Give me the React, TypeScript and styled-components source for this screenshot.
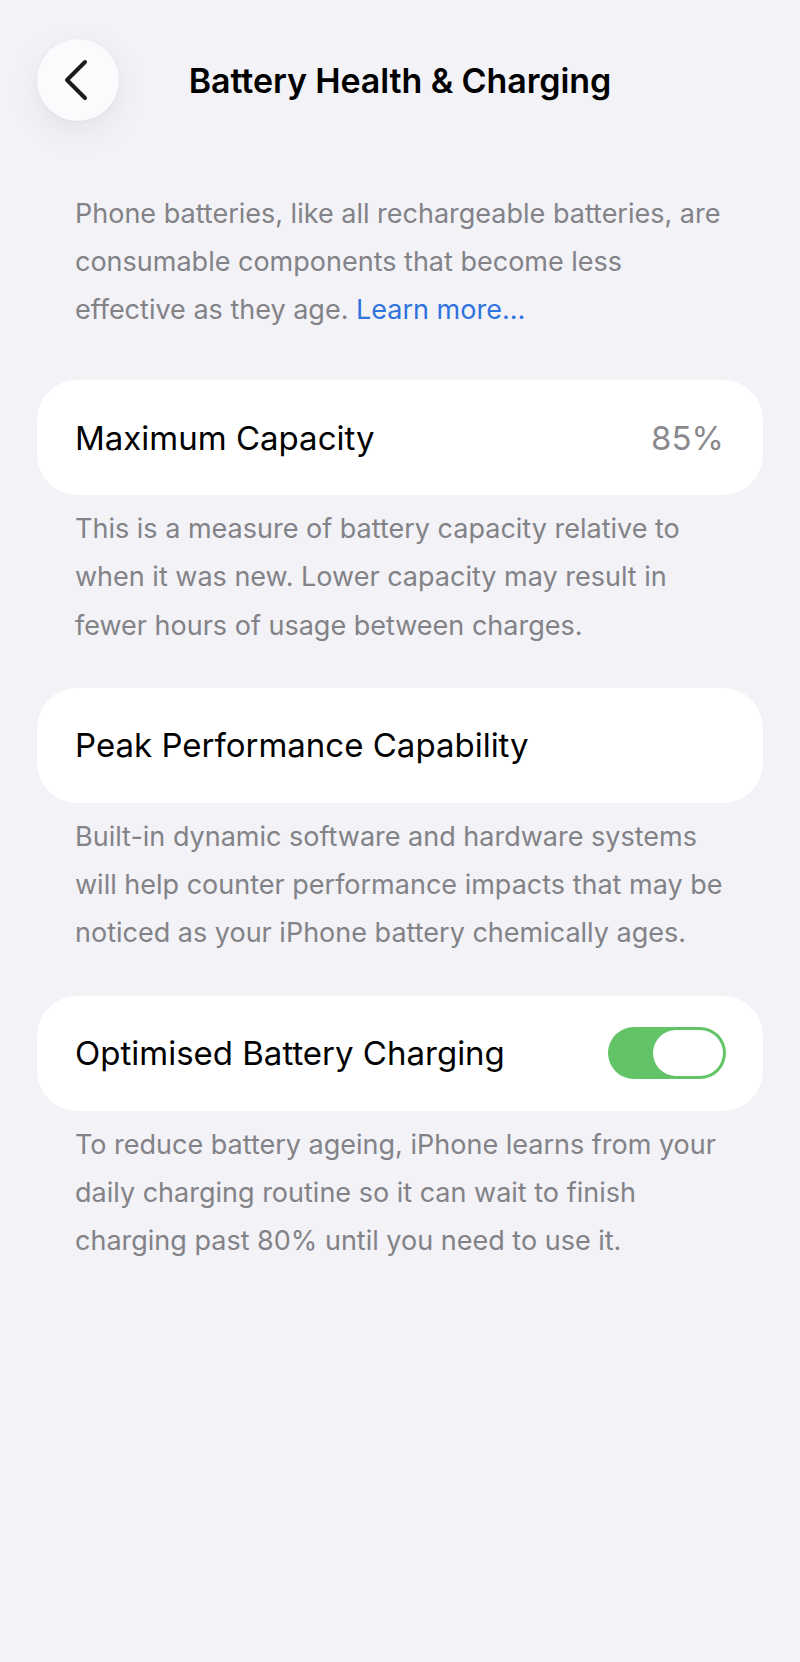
import styled, { createGlobalStyle } from 'styled-components'

const GlobalStyle = createGlobalStyle`
  html, body {
    margin: 0;
    padding: 0;
    background: #f2f2f7;
  }

  body {
    font-family: Inter, "Noto Sans", "Liberation Sans", sans-serif;
    -webkit-font-smoothing: antialiased;
  }
`

const Screen = styled.div`
  background: #f2f2f7;
  min-height: 1662px;
  box-sizing: border-box;
  padding: 39px 37px 0;
`

const Header = styled.header`
  display: grid;
  grid-template-columns: 82px 1fr 82px;
  align-items: center;
  height: 82px;
`

const BackButton = styled.button`
  width: 82px;
  height: 82px;
  border: none;
  border-radius: 50%;
  background: #fbfbfd;
  box-shadow: 0 10px 34px rgba(0, 0, 0, 0.07), 0 1px 4px rgba(0, 0, 0, 0.03);
  display: flex;
  align-items: center;
  justify-content: center;
  padding: 0 4px 0 0;
  cursor: pointer;
`

const Title = styled.h1`
  margin: 0;
  text-align: center;
  font-size: 34px;
  font-weight: 600;
  color: #000;
  letter-spacing: -0.1px;
`

const Intro = styled.p`
  margin: 69px 0 46px;
  padding: 0 38px;
  font-size: 27px;
  line-height: 48px;
  color: #828287;
  white-space: nowrap;
`

const Link = styled.a`
  color: #2f73e0;
  text-decoration: none;
`

const Section = styled.section`
  margin-bottom: 38px;
`

const Card = styled.div`
  height: 115px;
  box-sizing: border-box;
  background: #fff;
  border-radius: 40px;
  display: flex;
  align-items: center;
  justify-content: space-between;
  padding: 0 37px 0 38px;
`

const Label = styled.span`
  font-size: 33px;
  color: #000;
`

const Value = styled.span`
  font-size: 33px;
  color: #8a8a8e;
  margin-right: 2px;
`

const Footer = styled.p`
  margin: 10px 0 0;
  padding: 0 38px;
  font-size: 27px;
  line-height: 48.3px;
  color: #828287;
  white-space: nowrap;
`

const Toggle = styled.div<{ $on: boolean }>`
  width: 118px;
  height: 52px;
  box-sizing: border-box;
  border-radius: 26px;
  background: ${(p) => (p.$on ? '#62c466' : '#e9e9ea')};
  padding: 3px;
  display: flex;
  justify-content: ${(p) => (p.$on ? 'flex-end' : 'flex-start')};
`

const Knob = styled.div`
  width: 70px;
  height: 46px;
  border-radius: 23px;
  background: #fff;
`

function Chevron() {
  return (
    <svg width="26" height="42" viewBox="0 0 26 42" fill="none">
      <polyline
        points="22,3 4,21 22,39"
        stroke="#1c1c1e"
        strokeWidth="4"
        strokeLinecap="round"
        strokeLinejoin="round"
      />
    </svg>
  )
}

export default function App() {
  return (
    <Screen>
      <GlobalStyle />
      <Header>
        <BackButton aria-label="Back">
          <Chevron />
        </BackButton>
        <Title>Battery Health &amp; Charging</Title>
        <span />
      </Header>

      <Intro>
        Phone batteries, like all rechargeable batteries, are
        <br />
        consumable components that become less
        <br />
        effective as they age. <Link href="#">Learn more…</Link>
      </Intro>

      <Section>
        <Card>
          <Label>Maximum Capacity</Label>
          <Value>85%</Value>
        </Card>
        <Footer>
          This is a measure of battery capacity relative to
          <br />
          when it was new. Lower capacity may result in
          <br />
          fewer hours of usage between charges.
        </Footer>
      </Section>

      <Section>
        <Card>
          <Label>Peak Performance Capability</Label>
        </Card>
        <Footer>
          Built-in dynamic software and hardware systems
          <br />
          will help counter performance impacts that may be
          <br />
          noticed as your iPhone battery chemically ages.
        </Footer>
      </Section>

      <Section>
        <Card>
          <Label>Optimised Battery Charging</Label>
          <Toggle $on>
            <Knob />
          </Toggle>
        </Card>
        <Footer>
          To reduce battery ageing, iPhone learns from your
          <br />
          daily charging routine so it can wait to finish
          <br />
          charging past 80% until you need to use it.
        </Footer>
      </Section>
    </Screen>
  )
}
